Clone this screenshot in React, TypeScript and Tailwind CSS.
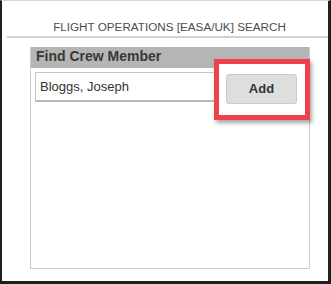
export default function App() {
  return (
    <div
      className="relative w-[331px] h-[284px] bg-white border-l-2 border-r-[3px] border-b-[3px] border-t border-[#1f1f1f] border-t-[#d6d6d6] overflow-hidden"
      style={{ fontFamily: '"Liberation Sans", Arial, sans-serif' }}
    >
      {/* Page title */}
      <div className="pl-[5px]">
        <div className="pt-[19px] pb-[2px] pl-[4px] border-b-2 border-[#d2d2d2] text-center text-[11.7px] leading-[14px] text-[#4d4d4d]">
          FLIGHT OPERATIONS [EASA/UK] SEARCH
        </div>
      </div>

      {/* Crew panel */}
      <div className="ml-[28px] mt-[9px] w-[280px] h-[222px] border-x border-b border-[#cccccc]">
        <div className="h-[21px] pt-[1px] pl-[5px] bg-[#b5b5b5] text-[14px] leading-[16px] font-bold text-[#383838]">
          Find Crew Member
        </div>
        <div className="flex items-start gap-[7px] pt-[4px] pl-[4px]">
          <input
            readOnly
            value="Bloggs, Joseph"
            className="w-[184px] h-[30px] px-[4px] border border-[#c6c6c6] border-b-2 border-b-[#b8b8b8] text-[13px] text-[#333] outline-none"
          />
          <button className="relative z-10 mt-[2px] w-[71px] h-[30px] rounded-[3px] border border-[#cacaca] bg-[#dedede] text-[13px] font-bold text-[#333]">
            Add
          </button>
        </div>
      </div>

      {/* Red highlight annotation */}
      <div className="absolute left-[212px] top-[58px] w-[96px] h-[61px] border-[5px] border-[#f0414a] bg-white shadow-[2px_3px_4px_rgba(0,0,0,0.35)]" />
    </div>
  );
}
